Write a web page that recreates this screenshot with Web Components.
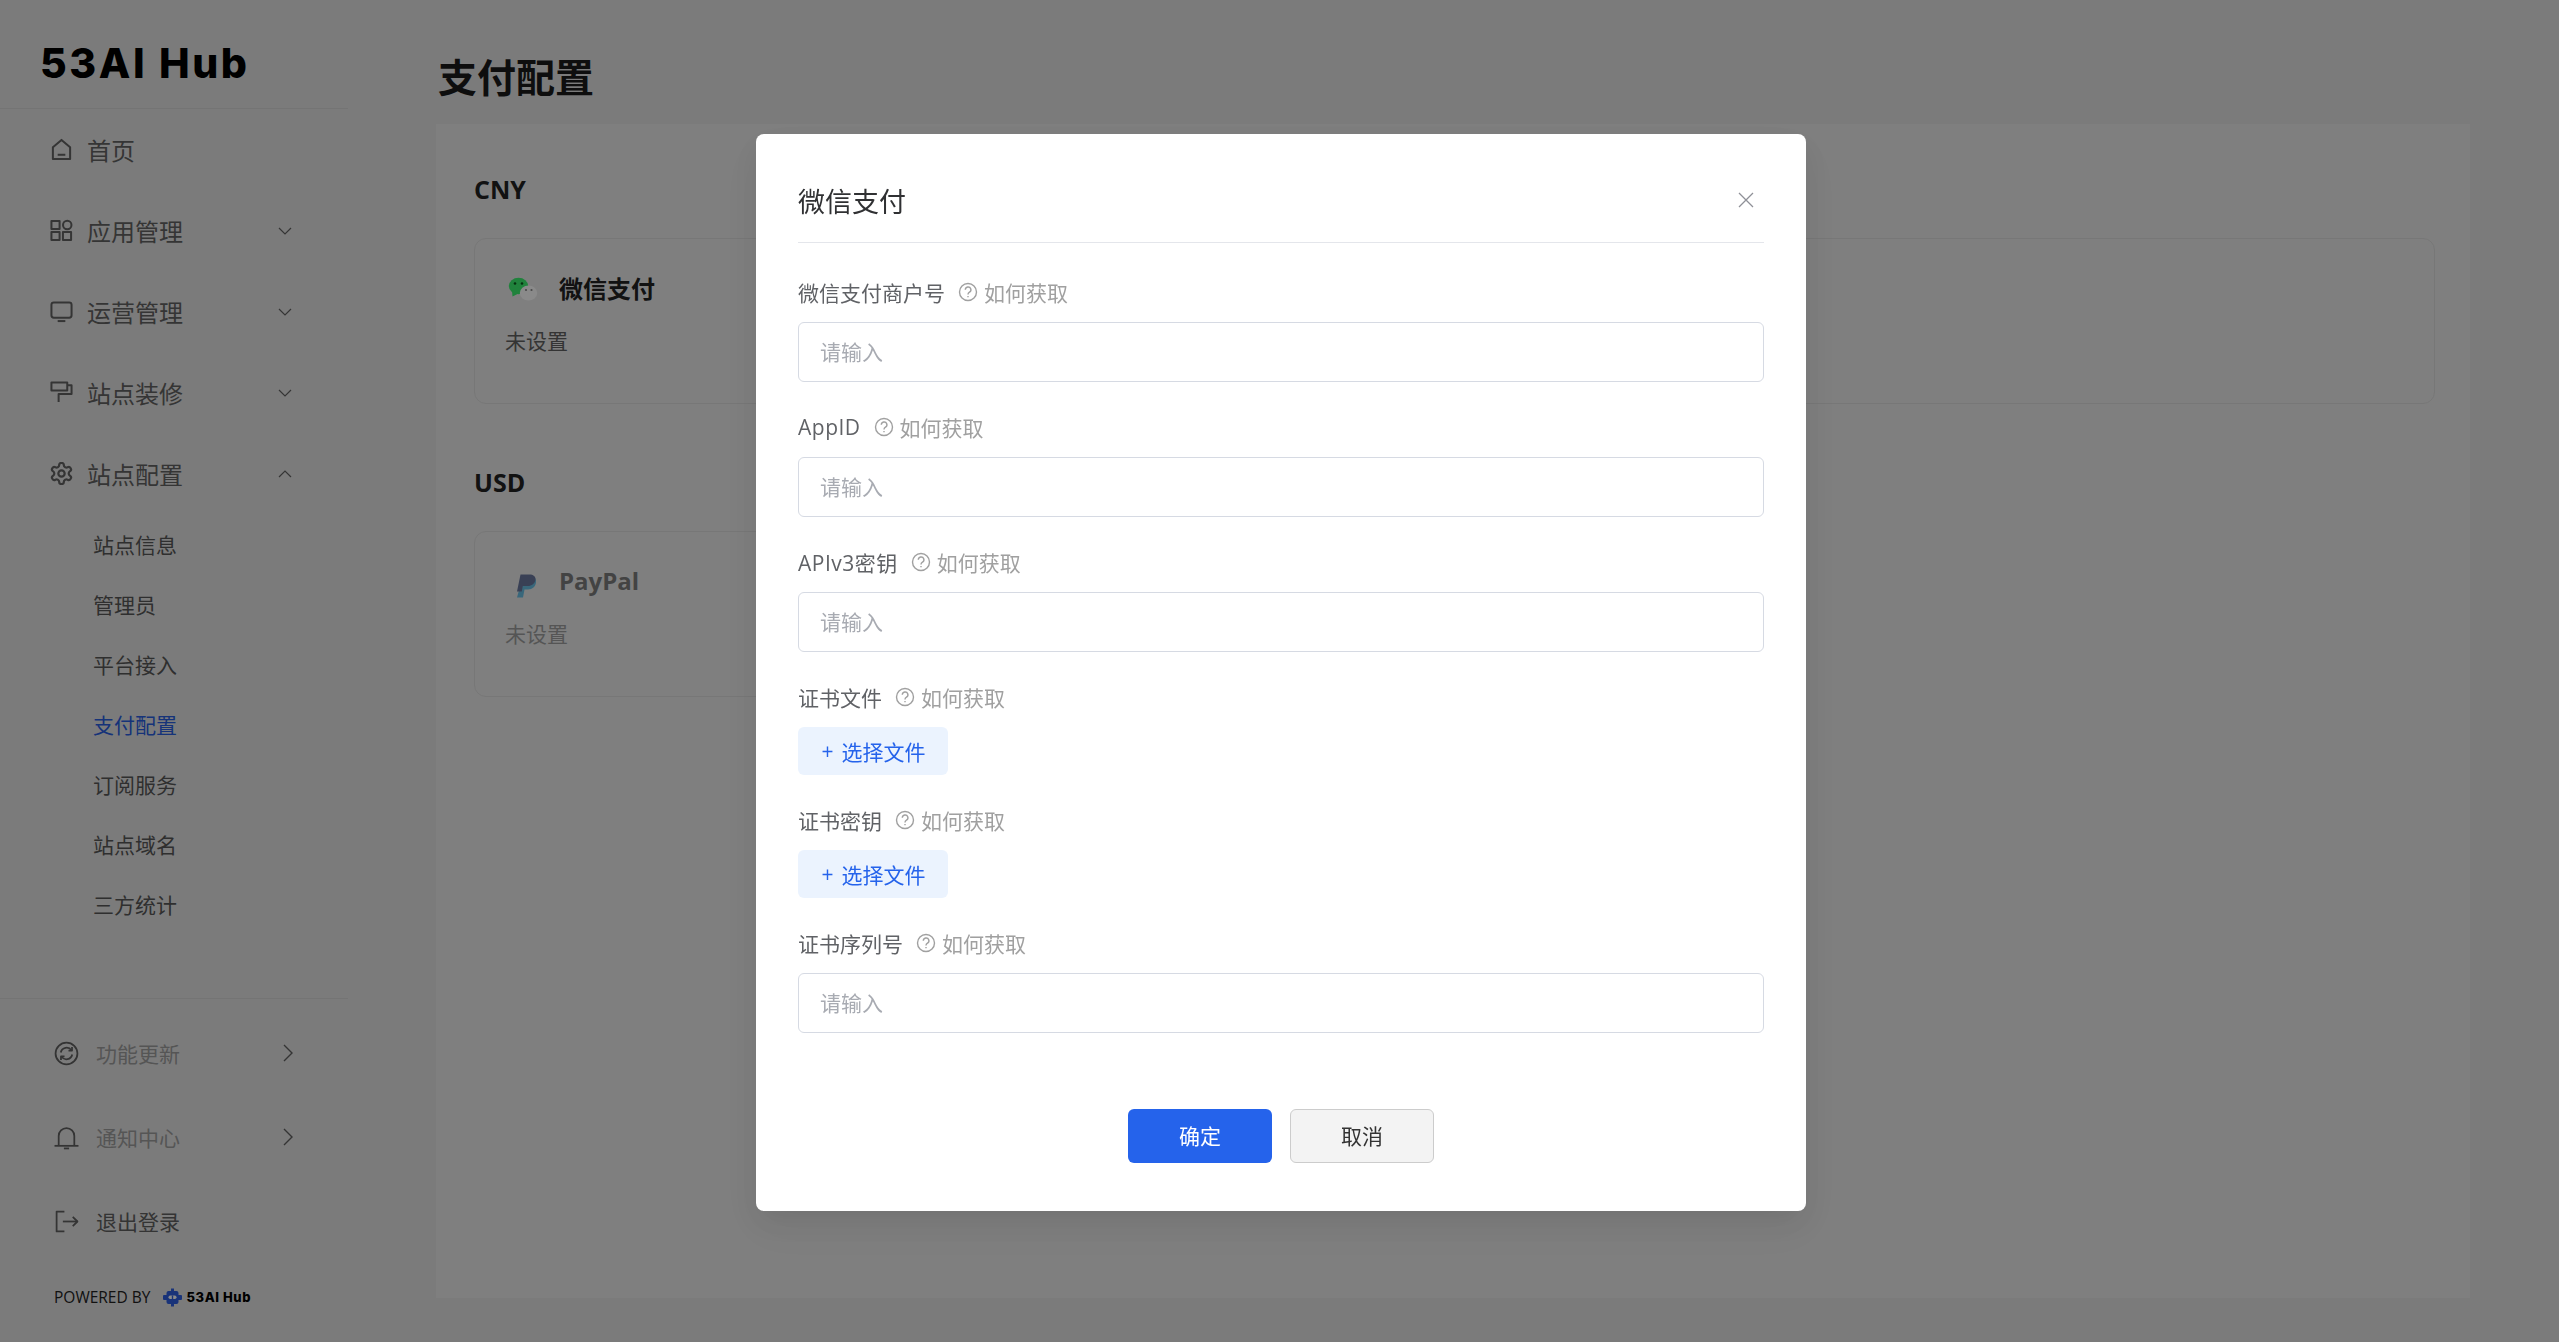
<!DOCTYPE html>
<html lang="zh-CN">
<head>
<meta charset="utf-8">
<title>支付配置</title>
<style>
    html, body {
        margin: 0;
        height: 100%;
    }
    body {
        font-family: "Open Sans", "Noto Sans CJK SC", sans-serif;
        background-color: #e4e4e4;
        overflow: hidden;
    }
</style>
</head>
<body>
<hub-layout>
    <hub-sidebar slot="side">
        <hub-nav-item icon="home">首页</hub-nav-item>
        <hub-nav-item icon="grid" arrow="down">应用管理</hub-nav-item>
        <hub-nav-item icon="monitor" arrow="down">运营管理</hub-nav-item>
        <hub-nav-item icon="roller" arrow="down">站点装修</hub-nav-item>
        <hub-nav-item icon="gear" arrow="up">站点配置</hub-nav-item>
        <hub-sub-item>站点信息</hub-sub-item>
        <hub-sub-item>管理员</hub-sub-item>
        <hub-sub-item>平台接入</hub-sub-item>
        <hub-sub-item active>支付配置</hub-sub-item>
        <hub-sub-item>订阅服务</hub-sub-item>
        <hub-sub-item>站点域名</hub-sub-item>
        <hub-sub-item>三方统计</hub-sub-item>
        <hub-foot-item slot="foot" icon="refresh" arrow muted>功能更新</hub-foot-item>
        <hub-foot-item slot="foot" icon="bell" arrow muted>通知中心</hub-foot-item>
        <hub-foot-item slot="foot" icon="logout">退出登录</hub-foot-item>
    </hub-sidebar>
    <hub-currency title="CNY">
        <hub-pay-card name="微信支付" icon="wechat" status="未设置"></hub-pay-card>
    </hub-currency>
    <hub-currency title="USD">
        <hub-pay-card name="PayPal" icon="paypal" status="未设置" dim></hub-pay-card>
    </hub-currency>
</hub-layout>

<hub-modal title="微信支付">
    <hub-field label="微信支付商户号"></hub-field>
    <hub-field label="AppID" latin></hub-field>
    <hub-field label="APIv3密钥" latin></hub-field>
    <hub-field label="证书文件" type="file"></hub-field>
    <hub-field label="证书密钥" type="file"></hub-field>
    <hub-field label="证书序列号"></hub-field>
</hub-modal>

<script>
const ICONS = {
    home: '<path d="M3 9.600 12 2l9 7.600V22H3z"/><path d="M8 17.500h8"/>',
    grid: '<rect x="1.500" y="2" width="8.500" height="8.500"/><circle cx="18" cy="6.200" r="4.400"/><rect x="1.500" y="13.500" width="8.500" height="8.500"/><rect x="13.500" y="13.500" width="8.500" height="8.500"/>',
    monitor: '<rect x="1.500" y="2.500" width="21" height="16" rx="2.500"/><path d="M8 22h8"/>',
    roller: '<path d="M1.500 1.500h16.500v8.500H1.500z"/><path d="M18 4.500h4.500v9H9V22"/>',
    gear: '<g transform="translate(-1.200 -1.200) scale(1.100)"><path d="M12.220 2h-.44a2 2 0 0 0-2 2v.18a2 2 0 0 1-1 1.730l-.43.25a2 2 0 0 1-2 0l-.15-.08a2 2 0 0 0-2.730.73l-.22.38a2 2 0 0 0 .73 2.730l.15.1a2 2 0 0 1 1 1.720v.51a2 2 0 0 1-1 1.740l-.15.09a2 2 0 0 0-.73 2.730l.22.38a2 2 0 0 0 2.730.73l.15-.08a2 2 0 0 1 2 0l.43.25a2 2 0 0 1 1 1.730V20a2 2 0 0 0 2 2h.44a2 2 0 0 0 2-2v-.18a2 2 0 0 1 1-1.730l.43-.25a2 2 0 0 1 2 0l.15.08a2 2 0 0 0 2.730-.73l.22-.39a2 2 0 0 0-.73-2.730l-.15-.08a2 2 0 0 1-1-1.740v-.5a2 2 0 0 1 1-1.740l.15-.09a2 2 0 0 0 .73-2.730l-.22-.38a2 2 0 0 0-2.730-.73l-.15.08a2 2 0 0 1-2 0l-.43-.25a2 2 0 0 1-1-1.730V4a2 2 0 0 0-2-2z"/><circle cx="12" cy="12" r="3"/></g>',
    refresh: '<circle cx="12" cy="12" r="10.500"/><path d="M6.500 11a5.700 5.700 0 0 1 10.300-2"/><path d="M17.500 13a5.700 5.700 0 0 1-10.300 2"/><path d="M17.300 5.800v3.400h-3.400"/><path d="M6.700 18.200v-3.400h3.400"/>',
    bell: '<path d="M4.500 20V10.500a7.500 7.500 0 0 1 15 0V20"/><path d="M.5 20h23"/><path d="M9.500 22.500h5"/>',
    logout: '<path d="M10 2.500H2.500v19H10"/><path d="M8.500 12h14"/><path d="M18 7.500l4.500 4.500-4.500 4.500"/>'
};

function icon(name, size, width) {
    return `<svg width="${size}" height="${size}" viewBox="0 0 24 24" fill="none" stroke="currentColor" stroke-width="${width}" stroke-linejoin="round">${ICONS[name]}</svg>`;
}

class HubLayout extends HTMLElement {
    constructor() {
        super();
        this.attachShadow({ mode: 'open' });
        this.shadowRoot.innerHTML = `
        <style>
            :host {
                display: flex;
                height: 100vh;
            }
            main {
                flex: 1;
                min-width: 0;
                display: flex;
                flex-direction: column;
                padding: 47px 89px 44px 88px;
            }
            h1 {
                margin: 0 0 17px 2px;
                font-size: 39px;
                line-height: 60px;
                font-weight: 700;
                color: #1a1a1a;
            }
            .panel {
                flex: 1;
                background-color: #ebebeb;
                padding: 47px 35px 0 38px;
            }
        </style>
        <slot name="side"></slot>
        <main>
            <h1>支付配置</h1>
            <div class="panel"><slot></slot></div>
        </main>
        `;
    }
}

class HubSidebar extends HTMLElement {
    constructor() {
        super();
        this.attachShadow({ mode: 'open' });
        this.shadowRoot.innerHTML = `
        <style>
            :host {
                display: flex;
                flex-direction: column;
                width: 348px;
                flex: none;
            }
            .logo {
                height: 109px;
                box-sizing: border-box;
                padding: 38px 0 0 40px;
                border-bottom: 1px solid #d7d7d7;
                font-family: Inter, sans-serif;
                font-size: 41px;
                line-height: 50px;
                font-weight: 800;
                letter-spacing: 2.600px;
                color: #000;
                white-space: nowrap;
            }
            .foot {
                margin-top: auto;
                padding: 12px 0 11px;
                border-top: 1px solid #d7d7d7;
            }
            .powered {
                display: flex;
                align-items: center;
                height: 68px;
                padding-left: 54px;
                font-size: 15.500px;
                color: #222;
            }
            .powered svg {
                margin: 0 4px 0 13px;
            }
            .powered b {
                font-family: Inter, sans-serif;
                font-size: 13px;
                font-weight: 800;
                letter-spacing: .6px;
                color: #000;
            }
        </style>
        <div class="logo">53AI Hub</div>
        <slot></slot>
        <div class="foot">
            <slot name="foot"></slot>
            <div class="powered">
                <span>POWERED BY</span>
                <svg width="19" height="19" viewBox="0 0 19 19">
                    <path fill="#2f5fe0" d="M8 .5h3v2.500h2.500a2 2 0 0 1 2 2V7H18a1 1 0 0 1 1 1v3a1 1 0 0 1-1 1h-2.500v2a2 2 0 0 1-2 2H11v2.500H8V16H5.500a2 2 0 0 1-2-2v-2H1a1 1 0 0 1-1-1V8a1 1 0 0 1 1-1h2.500V5a2 2 0 0 1 2-2H8z"/>
                    <rect x="5.500" y="7.500" width="8" height="3.500" rx="1.700" fill="#fff"/>
                    <rect x="8.800" y="7.500" width="1.400" height="3.500" fill="#2f5fe0"/>
                </svg>
                <b>53AI Hub</b>
            </div>
        </div>
        `;
    }
}

class HubNavItem extends HTMLElement {
    constructor() {
        super();
        this.attachShadow({ mode: 'open' });
        const arrow = this.getAttribute('arrow');
        const chevron = arrow === 'up' ? 'M1 8l6-6 6 6' : 'M1 2l6 6 6-6';
        this.shadowRoot.innerHTML = `
        <style>
            :host {
                display: flex;
                align-items: center;
                height: 81px;
                padding: 0 56px 0 50px;
                font-size: 24px;
                color: #626262;
            }
            svg { flex: none; }
            .label { margin-left: 14px; flex: 1; }
        </style>
        ${icon(this.getAttribute('icon'), 23, 2.1)}
        <span class="label"><slot></slot></span>
        ${arrow ? `<svg width="14" height="10" viewBox="0 0 14 10" fill="none" stroke="currentColor" stroke-width="1.200"><path d="${chevron}"/></svg>` : ''}
        `;
    }
}

class HubSubItem extends HTMLElement {
    constructor() {
        super();
        this.attachShadow({ mode: 'open' });
        this.shadowRoot.innerHTML = `
        <style>
            :host {
                display: flex;
                align-items: center;
                height: 60px;
                padding-left: 93px;
                font-size: 21px;
                color: #575757;
            }
            :host([active]) {
                color: #2a5fe0;
            }
        </style>
        <slot></slot>
        `;
    }
}

class HubFootItem extends HTMLElement {
    constructor() {
        super();
        this.attachShadow({ mode: 'open' });
        this.shadowRoot.innerHTML = `
        <style>
            :host {
                display: flex;
                align-items: center;
                height: 84px;
                padding: 0 55px 0 54px;
                font-size: 21px;
                color: #606060;
            }
            :host([muted]) .label {
                color: #9e9e9e;
            }
            svg { flex: none; }
            .label { margin-left: 17px; flex: 1; }
        </style>
        ${icon(this.getAttribute('icon'), 25, 1.7)}
        <span class="label"><slot></slot></span>
        ${this.hasAttribute('arrow') ? '<svg width="10" height="18" viewBox="0 0 10 18" fill="none" stroke="currentColor" stroke-width="1.400"><path d="M1 1l8 8-8 8"/></svg>' : ''}
        `;
    }
}

class HubCurrency extends HTMLElement {
    constructor() {
        super();
        this.attachShadow({ mode: 'open' });
        this.shadowRoot.innerHTML = `
        <style>
            :host {
                display: block;
                margin-bottom: 60px;
            }
            h2 {
                margin: 0 0 31px;
                font-size: 25px;
                line-height: 36px;
                font-weight: 700;
                color: #222;
            }
        </style>
        <h2>${this.getAttribute('title')}</h2>
        <slot></slot>
        `;
    }
}

const PAY_ICONS = {
    wechat: `<svg width="36" height="36" viewBox="0 0 36 36">
        <ellipse cx="13.500" cy="16" rx="9.700" ry="8.300" fill="#3cf070"/>
        <path d="M7 21l.5 5.500 6-3z" fill="#3cf070"/>
        <circle cx="10" cy="13.500" r="1.300" fill="#0c5a1c"/>
        <circle cx="17" cy="13.500" r="1.300" fill="#0c5a1c"/>
        <ellipse cx="23.500" cy="23" rx="8.700" ry="7.500" fill="#fff"/>
        <circle cx="21" cy="20" r="1.100" fill="#888"/>
        <circle cx="26.500" cy="20" r="1.100" fill="#888"/>
    </svg>`,
    paypal: `<svg width="36" height="36" viewBox="0 0 36 36">
        <path d="M12 34.500h6l1.500-8h3.500c4.500 0 7.500-3 8-7 .3-2.500-.5-4-1.500-5-1 5-4 7.500-8 7.500h-6z" fill="#009cde"/>
        <path d="M15.500 11.500h9c3.700 0 6.300 2 6 5-.4 4-3.700 6.500-7.700 6.500h-5l-1 5.500H12z" fill="#001a60"/>
    </svg>`
};

class HubPayCard extends HTMLElement {
    constructor() {
        super();
        this.attachShadow({ mode: 'open' });
        this.shadowRoot.innerHTML = `
        <style>
            :host {
                display: block;
                box-sizing: border-box;
                height: 166px;
                padding: 31px 30px 0;
                border: 1px solid #dcdcdc;
                border-radius: 12px;
            }
            :host([dim]) {
                max-width: 700px;
            }
            :host([dim]) .row, :host([dim]) .status {
                opacity: .55;
            }
            .row {
                display: flex;
                align-items: center;
                gap: 18px;
                height: 35px;
                font-size: 24px;
                font-weight: 700;
                color: #222;
            }
            svg { flex: none; }
            .status {
                margin-top: 21px;
                font-size: 21px;
                line-height: 30px;
                color: #606060;
            }
        </style>
        <div class="row">${PAY_ICONS[this.getAttribute('icon')]}<span>${this.getAttribute('name')}</span></div>
        <div class="status">${this.getAttribute('status')}</div>
        `;
    }
}

class HubModal extends HTMLElement {
    constructor() {
        super();
        this.attachShadow({ mode: 'open' });
        this.shadowRoot.innerHTML = `
        <style>
            :host {
                position: fixed;
                inset: 0;
                display: flex;
                justify-content: center;
                align-items: flex-start;
                box-sizing: border-box;
                padding: 134px 0 0 3px;
                background-color: rgba(0, 0, 0, .46);
            }
            .box {
                width: 1050px;
                height: 1077px;
                box-sizing: border-box;
                padding: 0 42px;
                background-color: #fff;
                border-radius: 8px;
                box-shadow: 0 18px 48px 6px rgba(0, 0, 0, .04), 0 12px 30px rgba(0, 0, 0, .08);
            }
            header {
                display: flex;
                align-items: center;
                justify-content: space-between;
                height: 109px;
                box-sizing: border-box;
                padding: 24px 10px 0 0;
                border-bottom: 1.500px solid #e4e6eb;
                margin-bottom: 33px;
                font-size: 27px;
                color: #303133;
            }
            footer {
                display: flex;
                justify-content: center;
                gap: 18px;
                margin-top: 76px;
            }
            button {
                width: 144px;
                height: 54px;
                box-sizing: border-box;
                border: 0;
                border-radius: 6px;
                font: inherit;
                font-size: 21px;
                padding: 0 0 2px;
            }
            .ok {
                background-color: #2563eb;
                color: #fff;
            }
            .cancel {
                background-color: #f3f3f3;
                border: 1.500px solid #ccc;
                color: #333;
            }
        </style>
        <div class="box">
            <header>
                <span>${this.getAttribute('title')}</span>
                <svg width="16" height="16" viewBox="0 0 16 16" fill="none" stroke="#8f9097" stroke-width="1.300"><path d="M1 1l14 14M15 1L1 15"/></svg>
            </header>
            <slot></slot>
            <footer>
                <button class="ok">确定</button>
                <button class="cancel">取消</button>
            </footer>
        </div>
        `;
    }
}

class HubField extends HTMLElement {
    constructor() {
        super();
        this.attachShadow({ mode: 'open' });
        const control = this.getAttribute('type') === 'file'
            ? '<div class="upload"><span class="plus">+</span><span>选择文件</span></div>'
            : '<input type="text" placeholder="请输入">';
        this.shadowRoot.innerHTML = `
        <style>
            :host {
                display: block;
                margin-bottom: 29px;
            }
            .label {
                display: flex;
                align-items: center;
                height: 32px;
                margin-bottom: 14px;
                font-size: 21px;
                color: #606266;
            }
            :host([latin]) .name {
                letter-spacing: .5px;
            }
            .hint {
                display: flex;
                align-items: center;
                gap: 6px;
                margin-left: 13px;
                color: #a0a0a0;
            }
            input {
                display: block;
                width: 100%;
                height: 60px;
                box-sizing: border-box;
                padding: 0 21px;
                border: 1.500px solid #d6dae3;
                border-radius: 6px;
                font: inherit;
                font-size: 21px;
                outline: none;
            }
            input::placeholder {
                color: #a8abb2;
            }
            .upload {
                display: inline-flex;
                align-items: center;
                gap: 8px;
                height: 48px;
                width: 150px;
                box-sizing: border-box;
                padding: 0 0 1px 23.500px;
                border-radius: 6px;
                background-color: #ebf3fe;
                font-size: 21px;
                color: #2563eb;
                vertical-align: top;
            }
        </style>
        <div class="label">
            <span class="name">${this.getAttribute('label')}</span>
            <span class="hint">
                <svg width="20" height="20" viewBox="0 0 20 20" fill="none" stroke="currentColor" stroke-width="1.400"><circle cx="10" cy="10" r="8.500"/><path d="M7.300 7.800a2.800 2.800 0 1 1 4.200 2.400c-1 .6-1.500 1-1.500 2.200"/><path d="M10 14v1.300"/></svg>
                如何获取
            </span>
        </div>
        ${control}
        `;
    }
}

customElements.define('hub-layout', HubLayout);
customElements.define('hub-sidebar', HubSidebar);
customElements.define('hub-nav-item', HubNavItem);
customElements.define('hub-sub-item', HubSubItem);
customElements.define('hub-foot-item', HubFootItem);
customElements.define('hub-currency', HubCurrency);
customElements.define('hub-pay-card', HubPayCard);
customElements.define('hub-modal', HubModal);
customElements.define('hub-field', HubField);
</script>
</body>
</html>
